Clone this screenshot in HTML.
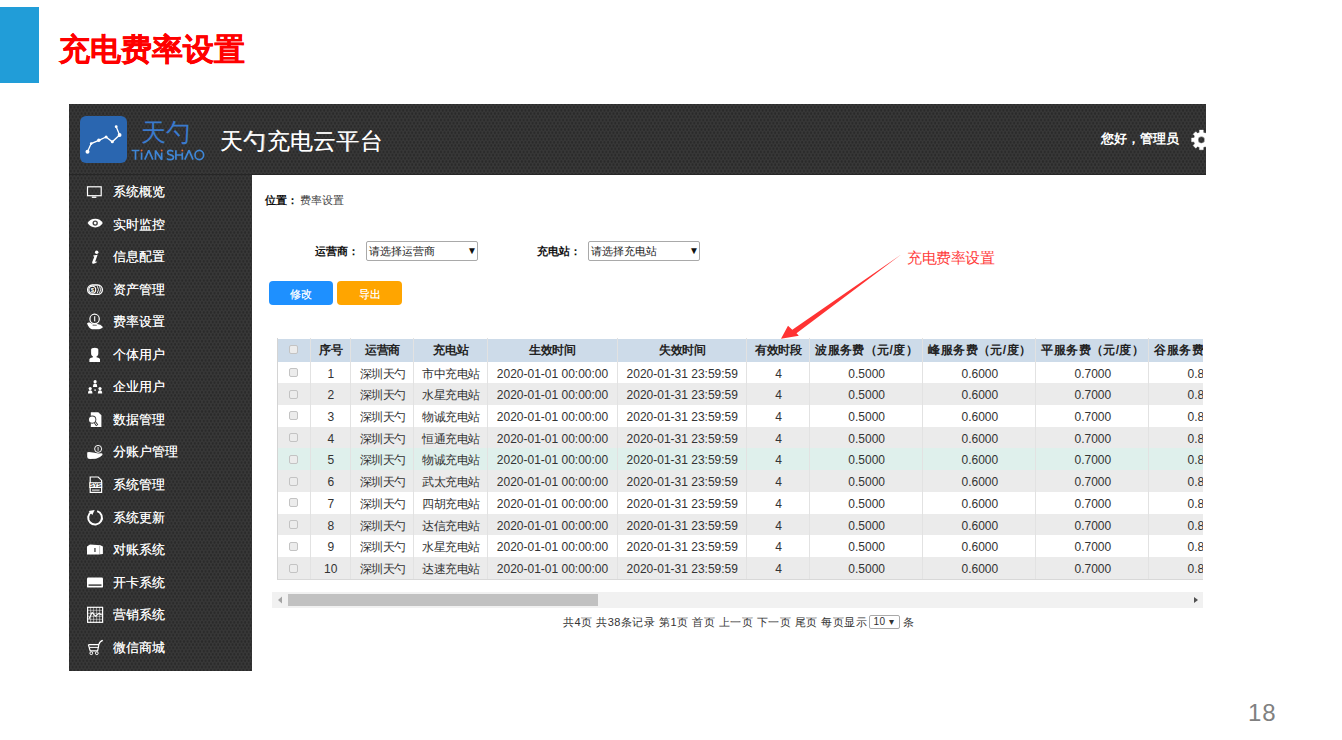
<!DOCTYPE html>
<html><head><meta charset="utf-8">
<style>
*{margin:0;padding:0;box-sizing:border-box}
html,body{width:1342px;height:740px;overflow:hidden;background:#fff;font-family:"Liberation Sans",sans-serif;position:relative}
.abs{position:absolute}
#bluebar{left:0;top:7px;width:39px;height:76px;background:#219dd8}
#title{left:59px;top:30px;font-size:31px;font-weight:bold;-webkit-text-stroke:0.3px #f00;color:#ff0000;line-height:40px;white-space:nowrap}
#pnum{left:1248px;top:698px;font-size:24px;color:#808080;line-height:30px;letter-spacing:1px}
.dark{background-color:#383838;background-image:radial-gradient(circle at 50% 50%,#292929 0.9px,transparent 1.4px),radial-gradient(circle at 50% 50%,#292929 0.9px,transparent 1.4px);background-size:3.6px 6.4px;background-position:0 0,1.8px 3.2px}
#header{left:69px;top:104px;width:1137px;height:71px;overflow:hidden;border-bottom:1px solid #262626}
#sidebar{left:69px;top:175px;width:183px;height:496px}
#logo{left:80px;top:116px;width:47px;height:47px;border-radius:6px;background:#2a66b0}
#logotxt{left:141px;top:117px;font-size:25px;color:#3a7acc;font-weight:300;line-height:30px;letter-spacing:0px}
#ptitle{left:220px;top:125px;font-size:23px;letter-spacing:0.3px;text-shadow:0.3px 0 0 rgba(255,255,255,0.6);color:#fff;line-height:32px;white-space:nowrap}
#hello{left:1101px;top:130px;font-size:13px;color:#fff;line-height:18px;font-weight:bold;white-space:nowrap}
.menu{left:113px;font-size:13px;color:#fff;line-height:20px;font-weight:500;text-shadow:0.4px 0 0 rgba(255,255,255,0.75);white-space:nowrap}
#tbl{left:277px;top:338px;width:926px;height:241.5px;overflow:hidden;border-left:1px solid #d4d4d4;border-bottom:1px solid #d8d8d8}
.thead{background:#cddbe9}
.vl{top:0;width:1px;height:240.5px;background:#e2e2e2}
.th{font-size:12px;font-weight:bold;color:#222;line-height:23px;letter-spacing:-0.3px;text-align:center;white-space:nowrap}
.td{font-size:12px;color:#333;line-height:23.5px;text-align:center;white-space:nowrap}
.cb{width:9px;height:9px;border:1px solid #c3c3c3;border-radius:2px;background:#ececec}
.lbl{font-size:11px;font-weight:bold;color:#111;line-height:14px;white-space:nowrap}
.sel{height:20px;border:1px solid #a9a9a9;border-radius:2px;background:#fff;font-size:11px;color:#222;line-height:18px;padding-left:2px;white-space:nowrap}
.sel .arr{position:absolute;right:0px;top:0;font-size:10px;line-height:18px;color:#111}
.btn{height:24px;border-radius:4px;color:#fff;font-size:11px;line-height:26px;font-weight:500;text-shadow:0.35px 0 0 rgba(255,255,255,0.7);text-align:center}
#sbtrack{left:272px;top:592px;width:931px;height:16px;background:#f1f1f1}
#sbthumb{left:288px;top:594px;width:310px;height:12px;background:#c1c1c1}
#pager{left:563px;top:613.5px;font-size:11px;letter-spacing:0.5px;color:#333;line-height:16px;white-space:nowrap}
#pgsel{display:inline-block;vertical-align:middle;height:14px;width:31px;border:1px solid #a9a9a9;border-radius:2px;font-size:10px;line-height:12px;padding-left:3px;margin:0 3px 2px 2px;position:relative;color:#333}
#annot{left:907px;top:248px;font-size:15px;letter-spacing:-0.4px;color:#ff3b3b;line-height:20px;white-space:nowrap}
</style></head>
<body>
<div id="bluebar" class="abs"></div>
<div id="title" class="abs">充电费率设置</div>

<div id="header" class="abs dark"></div>
<div id="sidebar" class="abs dark"></div>
<div id="logo" class="abs"><svg width="47" height="47" viewBox="0 0 47 47"><polyline points="7.5,35.7 11.2,27.6 18.8,24.3 26.1,20.9 32.3,25.8 39.6,19 36.2,10.7" fill="none" stroke="#fff" stroke-width="1.3"/><g fill="#fff"><circle cx="7.5" cy="35.7" r="2"/><circle cx="11.2" cy="27.6" r="1.3"/><circle cx="18.8" cy="24.3" r="1.7"/><circle cx="26.1" cy="20.9" r="1.5"/><circle cx="32.3" cy="25.8" r="1.5"/><circle cx="39.6" cy="19" r="1.9"/><circle cx="36.2" cy="10.7" r="1.4"/></g></svg></div>
<div id="logotxt" class="abs">天勺</div>
<svg id="logoen" class="abs" style="left:128px;top:145px" width="80" height="20" viewBox="128 145 80 20"><g fill="none" stroke="#3f86d6" stroke-width="1.7" stroke-linejoin="bevel"><path d="M131.6,150.5 H139.4 M135.5,150.5 V159.7 M141.6,152.4 V159.7 M144.8,159.7 L148.8,150.3 L152.9,159.7 M155.5,159.7 V150.5 L161.7,159.7 V152.4 M173.1,151.6 Q172,150.3 170.2,150.3 Q167.6,150.4 167.7,152.6 Q167.9,154.4 170.5,154.8 Q173.6,155.3 173.5,157.5 Q173.3,159.7 170.3,159.7 Q168,159.7 167,158.4 M175.9,150.3 V159.7 M175.9,155 H182.3 M182.3,152.4 V159.7 M184.8,159.7 L189,150.3 L193.1,159.7"/><ellipse cx="199.3" cy="155" rx="4.3" ry="4.6"/></g><g fill="#e0673e"><circle cx="141.6" cy="150.5" r="0.95"/><circle cx="161.7" cy="150.5" r="0.95"/><circle cx="182.3" cy="150.5" r="0.95"/></g></svg>
<div id="ptitle" class="abs">天勺充电云平台</div>
<div id="hello" class="abs">您好，管理员</div>

<!--MENU-->
<div class="abs menu" style="top:182.0px">系统概览</div>
<div class="abs menu" style="top:214.6px">实时监控</div>
<div class="abs menu" style="top:247.1px">信息配置</div>
<div class="abs menu" style="top:279.6px">资产管理</div>
<div class="abs menu" style="top:312.2px">费率设置</div>
<div class="abs menu" style="top:344.8px">个体用户</div>
<div class="abs menu" style="top:377.3px">企业用户</div>
<div class="abs menu" style="top:409.8px">数据管理</div>
<div class="abs menu" style="top:442.4px">分账户管理</div>
<div class="abs menu" style="top:474.9px">系统管理</div>
<div class="abs menu" style="top:507.5px">系统更新</div>
<div class="abs menu" style="top:540.0px">对账系统</div>
<div class="abs menu" style="top:572.6px">开卡系统</div>
<div class="abs menu" style="top:605.1px">营销系统</div>
<div class="abs menu" style="top:637.7px">微信商城</div>
<!--/MENU-->
<!--CONTENT-->
<div id="tbl" class="abs">
<div class="abs thead" style="left:0;top:0.50px;width:986px;height:23.5px"></div>
<div class="abs" style="left:0;top:23.50px;width:986px;height:21.72px;background:#fff"></div>
<div class="abs" style="left:0;top:45.22px;width:986px;height:21.72px;background:#ebebeb"></div>
<div class="abs" style="left:0;top:66.94px;width:986px;height:21.72px;background:#fff"></div>
<div class="abs" style="left:0;top:88.66px;width:986px;height:21.72px;background:#ebebeb"></div>
<div class="abs" style="left:0;top:110.38px;width:986px;height:21.72px;background:#dff0ec"></div>
<div class="abs" style="left:0;top:132.10px;width:986px;height:21.72px;background:#ebebeb"></div>
<div class="abs" style="left:0;top:153.82px;width:986px;height:21.72px;background:#fff"></div>
<div class="abs" style="left:0;top:175.54px;width:986px;height:21.72px;background:#ebebeb"></div>
<div class="abs" style="left:0;top:197.26px;width:986px;height:21.72px;background:#fff"></div>
<div class="abs" style="left:0;top:218.98px;width:986px;height:21.72px;background:#ebebeb"></div>
<div class="abs vl" style="left:31.5px"></div>
<div class="abs vl" style="left:72.0px"></div>
<div class="abs vl" style="left:135.0px"></div>
<div class="abs vl" style="left:208.5px"></div>
<div class="abs vl" style="left:338.5px"></div>
<div class="abs vl" style="left:468.0px"></div>
<div class="abs vl" style="left:531.0px"></div>
<div class="abs vl" style="left:644.3px"></div>
<div class="abs vl" style="left:757.4px"></div>
<div class="abs vl" style="left:870.3px"></div>
<div class="abs vl" style="left:983.5px"></div>
<div class="abs cb" style="left:11.2px;top:7px"></div>
<div class="abs th" style="left:32.5px;width:40.5px;top:0.8px">序号</div>
<div class="abs th" style="left:73.0px;width:63.0px;top:0.8px">运营商</div>
<div class="abs th" style="left:136.0px;width:73.5px;top:0.8px">充电站</div>
<div class="abs th" style="left:209.5px;width:130.0px;top:0.8px">生效时间</div>
<div class="abs th" style="left:339.5px;width:129.5px;top:0.8px">失效时间</div>
<div class="abs th" style="left:469.0px;width:63.0px;top:0.8px">有效时段</div>
<div class="abs th" style="left:532.0px;width:113.3px;top:0.8px;letter-spacing:0.4px">波服务费（元/度）</div>
<div class="abs th" style="left:645.3px;width:113.1px;top:0.8px;letter-spacing:0.4px">峰服务费（元/度）</div>
<div class="abs th" style="left:758.4px;width:112.9px;top:0.8px;letter-spacing:0.4px">平服务费（元/度）</div>
<div class="abs th" style="left:871.3px;width:113.2px;top:0.8px;letter-spacing:0.4px">谷服务费（元/度）</div>
<div class="abs cb" style="left:11.2px;top:30.0px"></div>
<div class="abs td" style="left:32.5px;width:40.5px;top:24.60px">1</div>
<div class="abs td" style="left:73.0px;width:63.0px;top:24.60px;letter-spacing:-0.5px">深圳天勺</div>
<div class="abs td" style="left:136.0px;width:73.5px;top:24.60px;letter-spacing:-0.5px">市中充电站</div>
<div class="abs td" style="left:209.5px;width:130.0px;top:24.60px">2020-01-01 00:00:00</div>
<div class="abs td" style="left:339.5px;width:129.5px;top:24.60px">2020-01-31 23:59:59</div>
<div class="abs td" style="left:469.0px;width:63.0px;top:24.60px">4</div>
<div class="abs td" style="left:532.0px;width:113.3px;top:24.60px">0.5000</div>
<div class="abs td" style="left:645.3px;width:113.1px;top:24.60px">0.6000</div>
<div class="abs td" style="left:758.4px;width:112.9px;top:24.60px">0.7000</div>
<div class="abs td" style="left:871.3px;width:113.2px;top:24.60px">0.8000</div>
<div class="abs cb" style="left:11.2px;top:51.7px"></div>
<div class="abs td" style="left:32.5px;width:40.5px;top:46.32px">2</div>
<div class="abs td" style="left:73.0px;width:63.0px;top:46.32px;letter-spacing:-0.5px">深圳天勺</div>
<div class="abs td" style="left:136.0px;width:73.5px;top:46.32px;letter-spacing:-0.5px">水星充电站</div>
<div class="abs td" style="left:209.5px;width:130.0px;top:46.32px">2020-01-01 00:00:00</div>
<div class="abs td" style="left:339.5px;width:129.5px;top:46.32px">2020-01-31 23:59:59</div>
<div class="abs td" style="left:469.0px;width:63.0px;top:46.32px">4</div>
<div class="abs td" style="left:532.0px;width:113.3px;top:46.32px">0.5000</div>
<div class="abs td" style="left:645.3px;width:113.1px;top:46.32px">0.6000</div>
<div class="abs td" style="left:758.4px;width:112.9px;top:46.32px">0.7000</div>
<div class="abs td" style="left:871.3px;width:113.2px;top:46.32px">0.8000</div>
<div class="abs cb" style="left:11.2px;top:73.4px"></div>
<div class="abs td" style="left:32.5px;width:40.5px;top:68.04px">3</div>
<div class="abs td" style="left:73.0px;width:63.0px;top:68.04px;letter-spacing:-0.5px">深圳天勺</div>
<div class="abs td" style="left:136.0px;width:73.5px;top:68.04px;letter-spacing:-0.5px">物诚充电站</div>
<div class="abs td" style="left:209.5px;width:130.0px;top:68.04px">2020-01-01 00:00:00</div>
<div class="abs td" style="left:339.5px;width:129.5px;top:68.04px">2020-01-31 23:59:59</div>
<div class="abs td" style="left:469.0px;width:63.0px;top:68.04px">4</div>
<div class="abs td" style="left:532.0px;width:113.3px;top:68.04px">0.5000</div>
<div class="abs td" style="left:645.3px;width:113.1px;top:68.04px">0.6000</div>
<div class="abs td" style="left:758.4px;width:112.9px;top:68.04px">0.7000</div>
<div class="abs td" style="left:871.3px;width:113.2px;top:68.04px">0.8000</div>
<div class="abs cb" style="left:11.2px;top:95.2px"></div>
<div class="abs td" style="left:32.5px;width:40.5px;top:89.76px">4</div>
<div class="abs td" style="left:73.0px;width:63.0px;top:89.76px;letter-spacing:-0.5px">深圳天勺</div>
<div class="abs td" style="left:136.0px;width:73.5px;top:89.76px;letter-spacing:-0.5px">恒通充电站</div>
<div class="abs td" style="left:209.5px;width:130.0px;top:89.76px">2020-01-01 00:00:00</div>
<div class="abs td" style="left:339.5px;width:129.5px;top:89.76px">2020-01-31 23:59:59</div>
<div class="abs td" style="left:469.0px;width:63.0px;top:89.76px">4</div>
<div class="abs td" style="left:532.0px;width:113.3px;top:89.76px">0.5000</div>
<div class="abs td" style="left:645.3px;width:113.1px;top:89.76px">0.6000</div>
<div class="abs td" style="left:758.4px;width:112.9px;top:89.76px">0.7000</div>
<div class="abs td" style="left:871.3px;width:113.2px;top:89.76px">0.8000</div>
<div class="abs cb" style="left:11.2px;top:116.9px"></div>
<div class="abs td" style="left:32.5px;width:40.5px;top:111.48px">5</div>
<div class="abs td" style="left:73.0px;width:63.0px;top:111.48px;letter-spacing:-0.5px">深圳天勺</div>
<div class="abs td" style="left:136.0px;width:73.5px;top:111.48px;letter-spacing:-0.5px">物诚充电站</div>
<div class="abs td" style="left:209.5px;width:130.0px;top:111.48px">2020-01-01 00:00:00</div>
<div class="abs td" style="left:339.5px;width:129.5px;top:111.48px">2020-01-31 23:59:59</div>
<div class="abs td" style="left:469.0px;width:63.0px;top:111.48px">4</div>
<div class="abs td" style="left:532.0px;width:113.3px;top:111.48px">0.5000</div>
<div class="abs td" style="left:645.3px;width:113.1px;top:111.48px">0.6000</div>
<div class="abs td" style="left:758.4px;width:112.9px;top:111.48px">0.7000</div>
<div class="abs td" style="left:871.3px;width:113.2px;top:111.48px">0.8000</div>
<div class="abs cb" style="left:11.2px;top:138.6px"></div>
<div class="abs td" style="left:32.5px;width:40.5px;top:133.20px">6</div>
<div class="abs td" style="left:73.0px;width:63.0px;top:133.20px;letter-spacing:-0.5px">深圳天勺</div>
<div class="abs td" style="left:136.0px;width:73.5px;top:133.20px;letter-spacing:-0.5px">武太充电站</div>
<div class="abs td" style="left:209.5px;width:130.0px;top:133.20px">2020-01-01 00:00:00</div>
<div class="abs td" style="left:339.5px;width:129.5px;top:133.20px">2020-01-31 23:59:59</div>
<div class="abs td" style="left:469.0px;width:63.0px;top:133.20px">4</div>
<div class="abs td" style="left:532.0px;width:113.3px;top:133.20px">0.5000</div>
<div class="abs td" style="left:645.3px;width:113.1px;top:133.20px">0.6000</div>
<div class="abs td" style="left:758.4px;width:112.9px;top:133.20px">0.7000</div>
<div class="abs td" style="left:871.3px;width:113.2px;top:133.20px">0.8000</div>
<div class="abs cb" style="left:11.2px;top:160.3px"></div>
<div class="abs td" style="left:32.5px;width:40.5px;top:154.92px">7</div>
<div class="abs td" style="left:73.0px;width:63.0px;top:154.92px;letter-spacing:-0.5px">深圳天勺</div>
<div class="abs td" style="left:136.0px;width:73.5px;top:154.92px;letter-spacing:-0.5px">四胡充电站</div>
<div class="abs td" style="left:209.5px;width:130.0px;top:154.92px">2020-01-01 00:00:00</div>
<div class="abs td" style="left:339.5px;width:129.5px;top:154.92px">2020-01-31 23:59:59</div>
<div class="abs td" style="left:469.0px;width:63.0px;top:154.92px">4</div>
<div class="abs td" style="left:532.0px;width:113.3px;top:154.92px">0.5000</div>
<div class="abs td" style="left:645.3px;width:113.1px;top:154.92px">0.6000</div>
<div class="abs td" style="left:758.4px;width:112.9px;top:154.92px">0.7000</div>
<div class="abs td" style="left:871.3px;width:113.2px;top:154.92px">0.8000</div>
<div class="abs cb" style="left:11.2px;top:182.0px"></div>
<div class="abs td" style="left:32.5px;width:40.5px;top:176.64px">8</div>
<div class="abs td" style="left:73.0px;width:63.0px;top:176.64px;letter-spacing:-0.5px">深圳天勺</div>
<div class="abs td" style="left:136.0px;width:73.5px;top:176.64px;letter-spacing:-0.5px">达信充电站</div>
<div class="abs td" style="left:209.5px;width:130.0px;top:176.64px">2020-01-01 00:00:00</div>
<div class="abs td" style="left:339.5px;width:129.5px;top:176.64px">2020-01-31 23:59:59</div>
<div class="abs td" style="left:469.0px;width:63.0px;top:176.64px">4</div>
<div class="abs td" style="left:532.0px;width:113.3px;top:176.64px">0.5000</div>
<div class="abs td" style="left:645.3px;width:113.1px;top:176.64px">0.6000</div>
<div class="abs td" style="left:758.4px;width:112.9px;top:176.64px">0.7000</div>
<div class="abs td" style="left:871.3px;width:113.2px;top:176.64px">0.8000</div>
<div class="abs cb" style="left:11.2px;top:203.8px"></div>
<div class="abs td" style="left:32.5px;width:40.5px;top:198.36px">9</div>
<div class="abs td" style="left:73.0px;width:63.0px;top:198.36px;letter-spacing:-0.5px">深圳天勺</div>
<div class="abs td" style="left:136.0px;width:73.5px;top:198.36px;letter-spacing:-0.5px">水星充电站</div>
<div class="abs td" style="left:209.5px;width:130.0px;top:198.36px">2020-01-01 00:00:00</div>
<div class="abs td" style="left:339.5px;width:129.5px;top:198.36px">2020-01-31 23:59:59</div>
<div class="abs td" style="left:469.0px;width:63.0px;top:198.36px">4</div>
<div class="abs td" style="left:532.0px;width:113.3px;top:198.36px">0.5000</div>
<div class="abs td" style="left:645.3px;width:113.1px;top:198.36px">0.6000</div>
<div class="abs td" style="left:758.4px;width:112.9px;top:198.36px">0.7000</div>
<div class="abs td" style="left:871.3px;width:113.2px;top:198.36px">0.8000</div>
<div class="abs cb" style="left:11.2px;top:225.5px"></div>
<div class="abs td" style="left:32.5px;width:40.5px;top:220.08px">10</div>
<div class="abs td" style="left:73.0px;width:63.0px;top:220.08px;letter-spacing:-0.5px">深圳天勺</div>
<div class="abs td" style="left:136.0px;width:73.5px;top:220.08px;letter-spacing:-0.5px">达速充电站</div>
<div class="abs td" style="left:209.5px;width:130.0px;top:220.08px">2020-01-01 00:00:00</div>
<div class="abs td" style="left:339.5px;width:129.5px;top:220.08px">2020-01-31 23:59:59</div>
<div class="abs td" style="left:469.0px;width:63.0px;top:220.08px">4</div>
<div class="abs td" style="left:532.0px;width:113.3px;top:220.08px">0.5000</div>
<div class="abs td" style="left:645.3px;width:113.1px;top:220.08px">0.6000</div>
<div class="abs td" style="left:758.4px;width:112.9px;top:220.08px">0.7000</div>
<div class="abs td" style="left:871.3px;width:113.2px;top:220.08px">0.8000</div>
</div>
<!--/CONTENT-->
<!--ICONS-->
<svg class="abs" style="left:80px;top:175px" width="30" height="496" viewBox="80 175 30 496">
<g fill="none" stroke="#fff" stroke-width="1.2">
<rect x="87.5" y="186.8" width="13.7" height="8.9"/>
</g>
<g fill="#fff">
<rect x="91.8" y="196.5" width="4.6" height="1.4"/>
<path d="M87.6,223.1 C90.5,217.4 100,217.4 102.8,223.1 C100,228.8 90.5,228.8 87.6,223.1Z"/>
</g>
<circle cx="95.2" cy="223.1" r="2.7" fill="#444"/>
<circle cx="95.2" cy="223.1" r="1.3" fill="#fff"/>
<circle cx="96.7" cy="252.3" r="1.75" fill="#fff"/>
<path d="M93.3,255.5 L97.6,254.8 L95.3,261.3 Q95.1,262.2 96.7,261.4 L97.2,262.1 Q94.6,264.1 92.8,263.7 Q91.7,263.3 92.3,261.8 L94.2,256.9 Q94.4,256.2 93.1,256.4Z" fill="#fff"/>
<rect x="87.6" y="285" width="14.8" height="9.4" rx="4.7" fill="none" stroke="#fff" stroke-width="1.3"/>
<circle cx="92.3" cy="289.7" r="3.4" fill="none" stroke="#fff" stroke-width="1.1"/>
<text x="92.3" y="291.9" font-size="6" font-weight="bold" fill="#fff" text-anchor="middle" font-family="Liberation Sans">$</text>
<path d="M97.3,286.2 Q99.6,289.7 97.3,293.2 M99.5,286.2 Q101.8,289.7 99.5,293.2" fill="none" stroke="#fff" stroke-width="0.9"/>
<circle cx="94.6" cy="318.9" r="4.7" fill="none" stroke="#fff" stroke-width="1.2"/>
<rect x="94" y="316.2" width="1.3" height="5.2" fill="#ddd"/>
<path d="M87,323.5 Q88,322.1 89.6,322.6 L93,324.2 L97,324 Q100.6,324.2 103,327 Q101.5,329.3 97,329.3 L92,329.3 Q89.4,329 87,323.5Z" fill="#fff"/>
<path d="M92.6,325.3 L96.8,325.3" stroke="#555" stroke-width="0.8"/>
<path d="M91.1,349.6 Q91.3,347.8 94.7,347.8 Q98.1,347.8 98.3,349.6 L98.3,354.2 Q97.7,356 96.5,356.6 L96.5,357.3 Q99.6,357.9 100,359.1 L100,362 L89.4,362 L89.4,359.1 Q89.8,357.9 92.9,357.3 L92.9,356.6 Q91.7,356 91.1,354.2Z" fill="#fff"/>
<g fill="#fff">
<circle cx="95.1" cy="381.7" r="1.6"/><path d="M93,387 Q93,383.6 95.1,383.6 Q97.2,383.6 97.2,387Z"/>
<circle cx="90.2" cy="388.6" r="1.6"/><path d="M88,393.6 Q88,390.3 90.2,390.3 Q92.4,390.3 92.4,393.6Z"/>
<circle cx="100" cy="388.6" r="1.6"/><path d="M97.8,393.6 Q97.8,390.3 100,390.3 Q102.2,390.3 102.2,393.6Z"/>
<rect x="94.4" y="389.4" width="1.4" height="1.4"/>
</g>
<path d="M90.8,412.2 L98.3,412.2 L101.4,415.2 L101.4,426.9 L90.8,426.9Z" fill="#fff"/>
<path d="M94.4,421.6 L97.2,425.6" stroke="#3a3a3a" stroke-width="2.6"/>
<path d="M94.6,421.9 L96.9,425.2" stroke="#fff" stroke-width="0.9"/>
<circle cx="92.2" cy="419.6" r="4.1" fill="#3a3a3a"/>
<circle cx="92.2" cy="419.6" r="3.2" fill="#fff"/>
<circle cx="98.1" cy="448.9" r="3.5" fill="none" stroke="#fff" stroke-width="1"/>
<rect x="97.5" y="447" width="1.2" height="3.8" fill="#ccc"/>
<path d="M87.2,452.6 Q87.4,451.9 89,451.9 L93,452.6 Q96,453.2 98.5,453.6 L101.5,453.2 Q103,453.4 102.4,455 Q100,457.8 96,458.8 L90,459 Q87.3,458.8 87.2,457Z" fill="#fff"/>
<path d="M90.2,477 L98.2,477 L101.6,480.4 L101.6,492.3 L90.2,492.3Z" fill="none" stroke="#fff" stroke-width="1.2"/>
<rect x="89.3" y="482.2" width="12.9" height="5.8" fill="#fff"/>
<text x="95.7" y="487.2" font-size="5.6" font-weight="bold" fill="#333" text-anchor="middle" font-family="Liberation Sans">SYS</text>
<rect x="92" y="489.6" width="7.6" height="1" fill="#fff"/>
<path d="M91.4,511.8 A6.9,6.9 0 1,0 97.2,511.1" fill="none" stroke="#fff" stroke-width="2"/>
<path d="M88.6,510.9 L94.6,510 L92.4,515Z" fill="#fff"/>
<path d="M87,546.6 L90,544.6 L100.5,545.2 L102.9,546.6 L102.9,554 L98.5,554.6 L87,554.6Z" fill="#fff"/><path d="M99.6,546 L99.6,554.2" stroke="#999" stroke-width="0.6"/>
<rect x="94.3" y="548" width="1.3" height="4" fill="#444"/>
<rect x="87" y="577.6" width="16" height="10" rx="1.2" fill="#fff"/>
<rect x="88.5" y="584.4" width="13" height="1.4" fill="#363636"/>
<rect x="87.6" y="607.3" width="15" height="15" fill="none" stroke="#fff" stroke-width="1.2"/>
<path d="M90.6,607 v16 M93.6,607 v16 M96.6,607 v16 M99.6,607 v16 M87,610.3 h16 M87,613.3 h16 M87,616.3 h16 M87,619.3 h16" stroke="#fff" stroke-width="0.5"/>
<path d="M88.9,619 L92.1,612.4 L95.4,616.2 L99,613.4 L101.8,615" fill="none" stroke="#fff" stroke-width="1.1"/>
<path d="M88.4,644.6 L98.8,644.6 Q100,641 102.8,640.4 M88.4,644.6 L90.2,650.8 L97.6,650.8 L98.8,645" fill="none" stroke="#fff" stroke-width="1.2"/>
<path d="M89.4,647.4 h9.4" stroke="#fff" stroke-width="1"/>
<circle cx="91.3" cy="653.2" r="1.4" fill="none" stroke="#fff" stroke-width="1"/>
<circle cx="96.8" cy="653.2" r="1.4" fill="none" stroke="#fff" stroke-width="1"/>
</svg>
<svg class="abs" style="left:1186px;top:126px" width="20" height="30" viewBox="1186 126 20 30"><path fill="#fff" fill-rule="evenodd" stroke="#fff" stroke-width="0.4" stroke-linejoin="round" d="M1211.22,138.03 L1211.22,141.77 L1208.76,141.79 L1207.94,143.77 L1209.67,145.52 L1207.02,148.17 L1205.27,146.44 L1203.29,147.26 L1203.27,149.72 L1199.53,149.72 L1199.51,147.26 L1197.53,146.44 L1195.78,148.17 L1193.13,145.52 L1194.86,143.77 L1194.04,141.79 L1191.58,141.77 L1191.58,138.03 L1194.04,138.01 L1194.86,136.03 L1193.13,134.28 L1195.78,131.63 L1197.53,133.36 L1199.51,132.54 L1199.53,130.08 L1203.27,130.08 L1203.29,132.54 L1205.27,133.36 L1207.02,131.63 L1209.67,134.28 L1207.94,136.03 L1208.76,138.01Z M1204.70,139.90 A3.3,3.3 0 1,0 1198.10,139.90 A3.3,3.3 0 1,0 1204.70,139.90Z"/></svg>
<!--/ICONS-->
<!--EXTRA-->
<div class="abs lbl" style="left:265px;top:193px">位置：<span style="font-weight:normal;color:#444;margin-left:2px">费率设置</span></div>
<div class="abs lbl" style="left:315px;top:244px">运营商：</div>
<div class="abs sel" style="left:366px;top:241px;width:112px">请选择运营商<span class="arr">▼</span></div>
<div class="abs lbl" style="left:537px;top:244px">充电站：</div>
<div class="abs sel" style="left:588px;top:241px;width:112px">请选择充电站<span class="arr">▼</span></div>
<div class="abs btn" style="left:269px;top:281px;width:64px;background:#1e90ff">修改</div>
<div class="abs btn" style="left:337px;top:281px;width:65px;background:#ffa500">导出</div>
<div id="sbtrack" class="abs"></div>
<div id="sbthumb" class="abs"></div>
<svg class="abs" style="left:272px;top:592px" width="16" height="16"><path d="M10,4.5 L6,8 L10,11.5Z" fill="#a3a3a3"/></svg>
<svg class="abs" style="left:1188px;top:592px" width="15" height="16"><path d="M6,5 L10,8 L6,11Z" fill="#505050"/></svg>
<div id="pager" class="abs">共4页 共38条记录 第1页 首页 上一页 下一页 尾页 每页显示<span id="pgsel">10 ▾</span>条</div>
<div id="annot" class="abs">充电费率设置</div>
<svg class="abs" style="left:770px;top:245px" width="140" height="100" viewBox="770 245 140 100"><path d="M901.5,254.3 L796.5,333.2 L798.8,335.8 L781,338.7 L788,325.8 L792.3,329.8 Z" fill="#ff3333"/></svg>
<!--/EXTRA-->
<div id="pnum" class="abs">18</div>
</body></html>
